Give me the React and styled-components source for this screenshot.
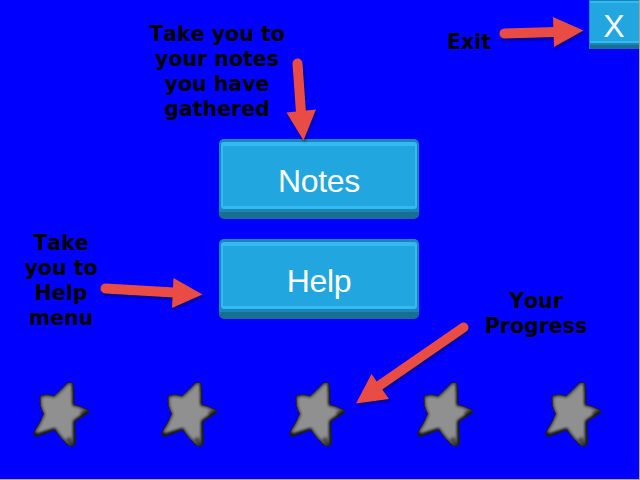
import React from "react";
import styled, { createGlobalStyle } from "styled-components";

const GlobalStyle = createGlobalStyle`
  * { box-sizing: border-box; }
  body { margin: 0; background: #0000ff; overflow: hidden; }
`;

const Screen = styled.main`
  position: relative;
  display: flex;
  flex-direction: column;
  width: 640px;
  height: 480px;
  background: #0000ff;
  border-right: 1px solid #aaa18f;
  border-bottom: 1px solid #aaa18f;
  overflow: hidden;
`;

const TopBar = styled.header`
  display: flex;
  justify-content: flex-end;
  height: 139px;
`;

const Button = styled.button`
  display: flex;
  align-items: center;
  justify-content: center;
  margin: 0;
  border: 0;
  color: #fff;
  font-family: "Liberation Sans", Arial, sans-serif;
  font-size: 32px;
  line-height: 38px;
`;

const MenuButton = styled(Button)`
  width: 200px;
  height: 80px;
  padding: 4px 0 0;
  border-radius: 5px;
  background: linear-gradient(#1a86b5 0 73px, #186f91 73px);
  letter-spacing: -0.3px;
  position: relative;
  isolation: isolate;
  &::before {
    content: "";
    position: absolute;
    z-index: -1;
    inset: 3px 2px 10px;
    border: solid #33b9f4;
    border-width: 4px 2px 3px;
    border-radius: 3px;
    background: #21a6e0;
  }
`;

const CloseButton = styled(Button)`
  width: 50px;
  height: 49px;
  padding: 3px 1px 0 0;
  border-left: 1px solid #1a86b5;
  background: linear-gradient(#1a86b5 0 1px, #33b9f4 1px 3px, #21a6e0 3px 41px, #33b9f4 41px 43px, #1a86b5 43px 45px, #186f91 45px);
`;

const Menu = styled.nav`
  display: flex;
  flex-direction: column;
  align-items: flex-start;
  gap: 20px;
  height: 240px;
  padding-left: 219px;
`;

const Progress = styled.footer`
  display: flex;
  gap: 68px;
  padding-left: 31px;
`;

const StarIcon = styled.svg`
  flex: none;
  width: 60px;
  height: 70px;
`;

const Label = styled.p`
  position: absolute;
  left: ${(p) => p.$x}px;
  top: ${(p) => p.$y}px;
  width: ${(p) => p.$w}px;
  margin: 0;
  color: #000;
  font: bold 20.5px/25px Verdana, "DejaVu Sans", sans-serif;
  font-kerning: none;
  text-align: center;
  white-space: pre-line;
`;

const Arrows = styled.svg`
  position: absolute;
  inset: 0;
  width: 640px;
  height: 480px;
  pointer-events: none;
  filter: drop-shadow(1px 2px 1.5px rgba(0, 0, 30, 0.55));
`;

const starPath =
  "M34.5 6Q38 1.5 42 4.5Q43.5 15 43 25.5Q50 27.5 57 31Q59 33 56 35L44 42.5Q44 54 44.5 64Q42 70 37 66Q30 60 24 51L7 57Q2 58 3 53Q9 44 12.5 35Q8 27 9 18Q12 14 23 17Q29 12 34.5 6Z";

function Star({ id }) {
  return (
    <StarIcon viewBox="0 0 60 70" aria-label="Star">
      <defs>
        <clipPath id={`${id}-clip`}><path d={starPath} /></clipPath>
        <filter id={`${id}-soft`} filterUnits="userSpaceOnUse" x="-10" y="-10" width="80" height="90" colorInterpolationFilters="sRGB">
          <feGaussianBlur stdDeviation="1.5" />
        </filter>
        <filter id={`${id}-edge`}><feGaussianBlur stdDeviation="0.35" /></filter>
      </defs>
      <g filter={`url(#${id}-edge)`}>
        <path d={starPath} fill="#909090" />
        <g clipPath={`url(#${id}-clip)`}>
          <path d={starPath} fill="none" stroke="#202020" strokeWidth="2.4" filter={`url(#${id}-soft)`} />
          <path d="M43.5 4L43.5 26M58 33L44 43L44 68M24 51L4 57L3 53" fill="none" stroke="#080808" strokeWidth="3.5" opacity=".85" strokeLinejoin="round" filter={`url(#${id}-soft)`} />
          <path d="M58 33L50 35M42 68L37 59" fill="none" stroke="#111" strokeWidth="5" opacity=".6" filter={`url(#${id}-soft)`} />
        </g>
        <path d={starPath} fill="none" stroke="#151515" strokeWidth="0.8" />
      </g>
    </StarIcon>
  );
}

const arrows = [
  { line: "M297.5 63.5L301 113", head: "286.5,112.5 316,109.5 303.5,140.5" },
  { line: "M504.5 33.5L555 32", head: "553,17 583.5,30.5 554,47" },
  { line: "M105.5 288.5L174 292.5", head: "173.5,278 202.5,294.5 172,308" },
  { line: "M463.5 327.5L378 386.5", head: "371.5,374 389,399 356,403.5" },
];

export default function App() {
  return (
    <>
      <GlobalStyle />
      <Screen>
        <TopBar><CloseButton aria-label="Exit">X</CloseButton></TopBar>
        <Menu>
          <MenuButton>Notes</MenuButton>
          <MenuButton>Help</MenuButton>
        </Menu>
        <Progress>
          {[1, 2, 3, 4, 5].map((n) => <Star key={n} id={`star-${n}`} />)}
        </Progress>
        <Label $x={137} $y={22} $w={160}>{"Take you to\nyour notes\nyou have\ngathered"}</Label>
        <Label $x={429} $y={30} $w={80}>Exit</Label>
        <Label $x={11} $y={231} $w={100}>{"Take\nyou to\nHelp\nmenu"}</Label>
        <Label $x={466} $y={289} $w={140}>{"Your\nProgress"}</Label>
        <Arrows viewBox="0 0 640 480">
          {arrows.map((a) => (
            <g key={a.line} fill="#e94b45">
              <path d={a.line} stroke="#e94b45" strokeWidth="10" strokeLinecap="round" />
              <polygon points={a.head} />
            </g>
          ))}
        </Arrows>
      </Screen>
    </>
  );
}
